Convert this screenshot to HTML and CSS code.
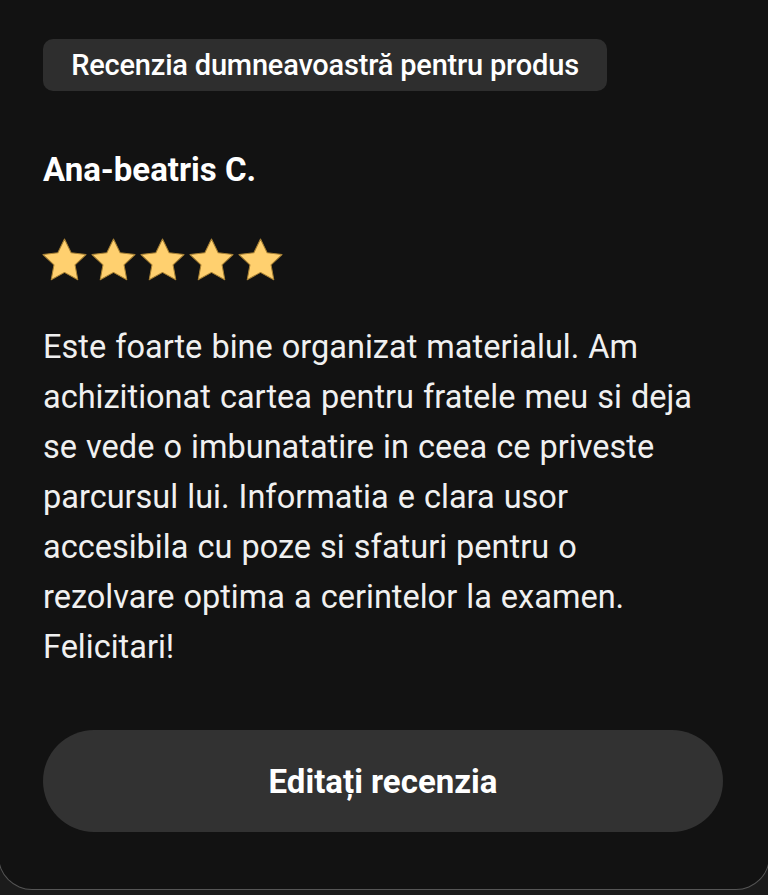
FILE: index.html
```html
<!DOCTYPE html>
<html lang="ro">
<head>
<meta charset="utf-8">
<link rel="stylesheet" href="styles.css">
</head>
<body>
<div class="card">
  <div class="chip"><span class="chip-text">Recenzia dumneavoastră pentru produs</span></div>
  <div class="name">Ana-beatris C.</div>
  <div class="stars">
    <svg class="star" viewBox="0 0 24 24"><path d="M12 2.6l2.9 6 6.5.8-4.8 4.5 1.2 6.5L12 17.2l-5.8 3.2 1.2-6.5L2.6 9.4l6.5-.8z"/></svg>
    <svg class="star" viewBox="0 0 24 24"><path d="M12 2.6l2.9 6 6.5.8-4.8 4.5 1.2 6.5L12 17.2l-5.8 3.2 1.2-6.5L2.6 9.4l6.5-.8z"/></svg>
    <svg class="star" viewBox="0 0 24 24"><path d="M12 2.6l2.9 6 6.5.8-4.8 4.5 1.2 6.5L12 17.2l-5.8 3.2 1.2-6.5L2.6 9.4l6.5-.8z"/></svg>
    <svg class="star" viewBox="0 0 24 24"><path d="M12 2.6l2.9 6 6.5.8-4.8 4.5 1.2 6.5L12 17.2l-5.8 3.2 1.2-6.5L2.6 9.4l6.5-.8z"/></svg>
    <svg class="star" viewBox="0 0 24 24"><path d="M12 2.6l2.9 6 6.5.8-4.8 4.5 1.2 6.5L12 17.2l-5.8 3.2 1.2-6.5L2.6 9.4l6.5-.8z"/></svg>
  </div>
  <p class="review">Este foarte bine organizat materialul. Am achizitionat cartea pentru fratele meu si deja se vede o imbunatatire in ceea ce priveste parcursul lui. Informatia e clara usor accesibila cu poze si sfaturi pentru o rezolvare optima a cerintelor la examen. Felicitari!</p>
  <button class="edit">Editați recenzia</button>
</div>
```

FILE: styles.css
```css
html, body {
  margin: 0;
  padding: 0;
  background: #1b1b1b;
  height: 895px;
  overflow: hidden;
}
body {
  font-family: Roboto, "Noto Sans", sans-serif;
  color: #fff;
}
.card {
  box-sizing: border-box;
  width: 772px;
  margin-left: -2px;
  height: 890px;
  background: #121212;
  border: 1.5px solid #555;
  border-top: none;
  border-radius: 0 0 34px 34px;
  padding: 39px 0 0 44px;
  display: flex;
  flex-direction: column;
  align-items: flex-start;
}
.chip {
  background: #2e2e2e;
  border-radius: 10px;
  height: 52px;
  width: 564px;
  display: flex;
  align-items: center;
  justify-content: center;
}
.chip-text {
  font-size: 29px;
  font-weight: 500;
  letter-spacing: -0.2px;
  white-space: nowrap;
}
.name {
  margin-top: 59px;
  font-size: 33px;
  font-weight: 700;
  line-height: 40px;
}
.stars {
  margin-top: 43px;
  margin-left: -6px;
  display: flex;
}
.star {
  width: 55px;
  height: 55px;
  margin-right: -6px;
}
.star path {
  fill: #ffd06f;
  stroke: #a88134;
  stroke-width: 0.45;
  stroke-linejoin: round;
}
.review {
  margin: 34px 0 0 0;
  font-size: 32.5px;
  line-height: 50px;
  color: #f0f0f0;
  width: 660px;
  word-spacing: 1px;
}
.edit {
  margin-top: 58px;
  width: 680px;
  height: 102px;
  border: none;
  border-radius: 51px;
  background: #323232;
  color: #fff;
  font-family: Roboto, "Noto Sans", sans-serif;
  font-size: 33px;
  font-weight: 700;
  padding: 0;
}
```
